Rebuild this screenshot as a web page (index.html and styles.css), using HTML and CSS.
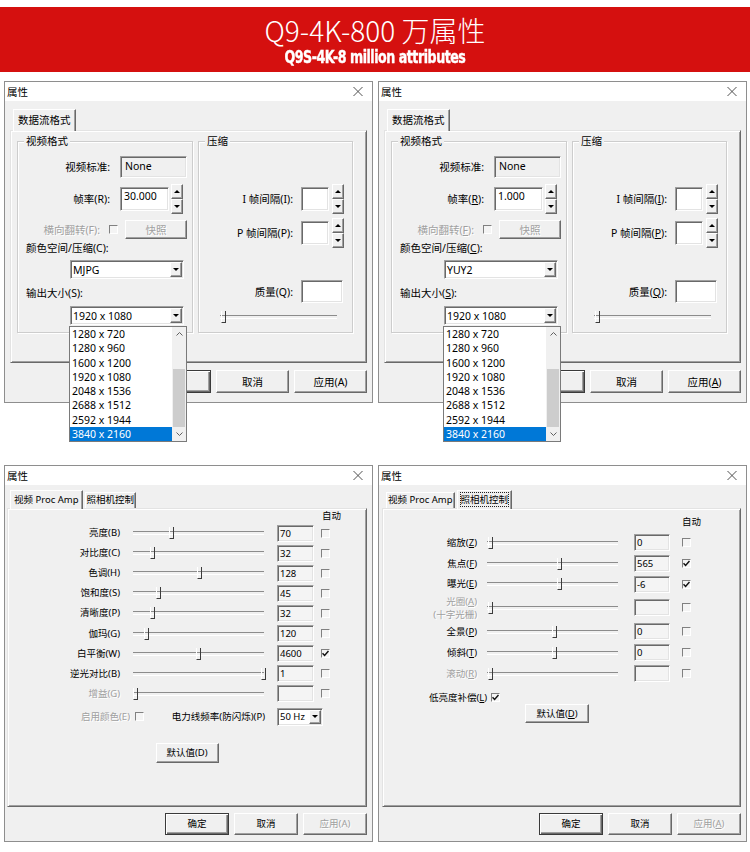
FILE: index.html
```html
<!DOCTYPE html>
<html lang="zh-CN">
<head>
    <meta charset="UTF-8">
    <meta name="viewport" content="width=device-width, initial-scale=1.0">
    <title>Q9-4K-800 万属性</title>
    <link rel="stylesheet" href="styles.css">
</head>
<body>
    <header class="banner">
        <h1>Q9-4K-800 万属性</h1>
        <p><span>Q9S-4K-8 million attributes</span></p>
    </header>

    <main class="shots">

        <!-- stream format, MJPG -->
        <section class="dlg dlg-stream">
            <div class="dlg-title">
                <span>属性</span>
                <svg width="10" height="9" viewBox="0 0 10 9"><path d="M0.5 0L9.5 9M9.5 0L0.5 9" stroke="#505050" fill="none"/></svg>
            </div>
            <div class="dlg-body">
                <div class="tabs"><span class="tab on">数据流格式</span></div>
                <div class="panel">
                    <div class="group g-video">
                        <div class="legend">视频格式</div>
                        <div class="field f-std"><span class="lbl">视频标准:</span><span class="static sunken">None</span></div>
                        <div class="field f-fps"><span class="lbl">帧率(R):</span><span class="edit sunken w49">30.000</span><span class="spin"><i class="up"></i><i class="down"></i></span></div>
                        <div class="field f-flip"><span class="lbl dis">横向翻转(F):</span><span class="check"></span><span class="btn snap dis">快照</span></div>
                        <div class="cap cap-color">颜色空间/压缩(C):</div>
                        <div class="combo sunken combo-color"><span>MJPG</span><i class="drop"></i></div>
                        <div class="cap cap-size">输出大小(S):</div>
                        <div class="combo sunken combo-size"><span>1920 x 1080</span><i class="drop"></i>
                            <div class="list">
                                <ul>
                                    <li>1280 x 720</li>
                                    <li>1280 x 960</li>
                                    <li>1600 x 1200</li>
                                    <li>1920 x 1080</li>
                                    <li>2048 x 1536</li>
                                    <li>2688 x 1512</li>
                                    <li>2592 x 1944</li>
                                    <li class="sel">3840 x 2160</li>
                                </ul>
                                <div class="sb">
                                    <span class="sb-btn"><svg width="7" height="4" viewBox="0 0 7 4"><path d="M0.5 3.5L3.5 0.5L6.5 3.5" stroke="#606060" fill="none"/></svg></span>
                                    <span class="sb-track"><span class="sb-thumb"></span></span>
                                    <span class="sb-btn"><svg width="7" height="4" viewBox="0 0 7 4"><path d="M0.5 0.5L3.5 3.5L6.5 0.5" stroke="#606060" fill="none"/></svg></span>
                                </div>
                            </div>
                        </div>
                    </div>
                    <div class="group g-comp">
                        <div class="legend">压缩</div>
                        <div class="field f-i"><span class="lbl">I 帧间隔(I):</span><span class="edit sunken w28"></span><span class="spin"><i class="up"></i><i class="down"></i></span></div>
                        <div class="field f-p"><span class="lbl">P 帧间隔(P):</span><span class="edit sunken w28"></span><span class="spin"><i class="up"></i><i class="down"></i></span></div>
                        <div class="field f-q"><span class="lbl">质量(Q):</span><span class="edit sunken w42"></span></div>
                        <div class="slider q-slider"><span class="thumb" style="left: 3%"></span></div>
                    </div>
                </div>
                <div class="actions">
                    <span class="btn default">确定</span>
                    <span class="btn">取消</span>
                    <span class="btn">应用(A)</span>
                </div>
            </div>
        </section>

        <!-- stream format, YUY2 -->
        <section class="dlg dlg-stream">
            <div class="dlg-title">
                <span>属性</span>
                <svg width="10" height="9" viewBox="0 0 10 9"><path d="M0.5 0L9.5 9M9.5 0L0.5 9" stroke="#505050" fill="none"/></svg>
            </div>
            <div class="dlg-body">
                <div class="tabs"><span class="tab on">数据流格式</span></div>
                <div class="panel">
                    <div class="group g-video">
                        <div class="legend">视频格式</div>
                        <div class="field f-std"><span class="lbl">视频标准:</span><span class="static sunken">None</span></div>
                        <div class="field f-fps"><span class="lbl">帧率(<u>R</u>):</span><span class="edit sunken w49">1.000</span><span class="spin"><i class="up"></i><i class="down"></i></span></div>
                        <div class="field f-flip"><span class="lbl dis">横向翻转(<u>F</u>):</span><span class="check"></span><span class="btn snap dis">快照</span></div>
                        <div class="cap cap-color">颜色空间/压缩(<u>C</u>):</div>
                        <div class="combo sunken combo-color"><span>YUY2</span><i class="drop"></i></div>
                        <div class="cap cap-size">输出大小(<u>S</u>):</div>
                        <div class="combo sunken combo-size"><span>1920 x 1080</span><i class="drop"></i>
                            <div class="list">
                                <ul>
                                    <li>1280 x 720</li>
                                    <li>1280 x 960</li>
                                    <li>1600 x 1200</li>
                                    <li>1920 x 1080</li>
                                    <li>2048 x 1536</li>
                                    <li>2688 x 1512</li>
                                    <li>2592 x 1944</li>
                                    <li class="sel">3840 x 2160</li>
                                </ul>
                                <div class="sb">
                                    <span class="sb-btn"><svg width="7" height="4" viewBox="0 0 7 4"><path d="M0.5 3.5L3.5 0.5L6.5 3.5" stroke="#606060" fill="none"/></svg></span>
                                    <span class="sb-track"><span class="sb-thumb"></span></span>
                                    <span class="sb-btn"><svg width="7" height="4" viewBox="0 0 7 4"><path d="M0.5 0.5L3.5 3.5L6.5 0.5" stroke="#606060" fill="none"/></svg></span>
                                </div>
                            </div>
                        </div>
                    </div>
                    <div class="group g-comp">
                        <div class="legend">压缩</div>
                        <div class="field f-i"><span class="lbl">I 帧间隔(<u>I</u>):</span><span class="edit sunken w28"></span><span class="spin"><i class="up"></i><i class="down"></i></span></div>
                        <div class="field f-p"><span class="lbl">P 帧间隔(<u>P</u>):</span><span class="edit sunken w28"></span><span class="spin"><i class="up"></i><i class="down"></i></span></div>
                        <div class="field f-q"><span class="lbl">质量(<u>Q</u>):</span><span class="edit sunken w42"></span></div>
                        <div class="slider q-slider"><span class="thumb" style="left: 3%"></span></div>
                    </div>
                </div>
                <div class="actions">
                    <span class="btn default">确定</span>
                    <span class="btn">取消</span>
                    <span class="btn">应用(<u>A</u>)</span>
                </div>
            </div>
        </section>

        <!-- video proc amp -->
        <section class="dlg dlg-amp amp-video">
            <div class="dlg-title">
                <span>属性</span>
                <svg width="10" height="9" viewBox="0 0 10 9"><path d="M0.5 0L9.5 9M9.5 0L0.5 9" stroke="#505050" fill="none"/></svg>
            </div>
            <div class="dlg-body">
                <div class="tabs"><span class="tab on">视频 Proc Amp</span><span class="tab">照相机控制</span></div>
                <div class="panel">
                    <div class="auto-head">自动</div>
                    <div class="prop"><span class="lbl">亮度(B)</span><span class="slider"><span class="thumb" style="left: 30%"></span></span><span class="edit sunken">70</span><span class="check"></span></div>
                    <div class="prop"><span class="lbl">对比度(C)</span><span class="slider"><span class="thumb" style="left: 15%"></span></span><span class="edit sunken">32</span><span class="check"></span></div>
                    <div class="prop"><span class="lbl">色调(H)</span><span class="slider"><span class="thumb" style="left: 51%"></span></span><span class="edit sunken">128</span><span class="check"></span></div>
                    <div class="prop"><span class="lbl">饱和度(S)</span><span class="slider"><span class="thumb" style="left: 20%"></span></span><span class="edit sunken">45</span><span class="check"></span></div>
                    <div class="prop"><span class="lbl">清晰度(P)</span><span class="slider"><span class="thumb" style="left: 15%"></span></span><span class="edit sunken">32</span><span class="check"></span></div>
                    <div class="prop"><span class="lbl">伽玛(G)</span><span class="slider"><span class="thumb" style="left: 11%"></span></span><span class="edit sunken">120</span><span class="check"></span></div>
                    <div class="prop"><span class="lbl">白平衡(W)</span><span class="slider"><span class="thumb" style="left: 50%"></span></span><span class="edit sunken">4600</span><span class="check"><svg width="7" height="7" viewBox="0 0 7 7"><path d="M0.5 3.2L2.6 5.4L6.5 1" stroke="#111" stroke-width="1.5" fill="none"/></svg></span></div>
                    <div class="prop"><span class="lbl">逆光对比(B)</span><span class="slider"><span class="thumb" style="left: 100%"></span></span><span class="edit sunken">1</span><span class="check"></span></div>
                    <div class="prop"><span class="lbl dis">增益(G)</span><span class="slider"><span class="thumb" style="left: 2%"></span></span><span class="edit sunken"></span><span class="check"></span></div>
                    <div class="power">
                        <span class="lbl-e dis">启用颜色(E)</span><span class="check"></span>
                        <span class="lbl-p">电力线频率(防闪烁)(P)</span>
                        <span class="combo sunken combo-hz"><span>50 Hz</span><i class="drop"></i></span>
                    </div>
                    <span class="btn btn-def">默认值(D)</span>
                </div>
                <div class="actions">
                    <span class="btn default">确定</span>
                    <span class="btn">取消</span>
                    <span class="btn dis">应用(A)</span>
                </div>
            </div>
        </section>

        <!-- camera control -->
        <section class="dlg dlg-amp amp-camera">
            <div class="dlg-title">
                <span>属性</span>
                <svg width="10" height="9" viewBox="0 0 10 9"><path d="M0.5 0L9.5 9M9.5 0L0.5 9" stroke="#505050" fill="none"/></svg>
            </div>
            <div class="dlg-body">
                <div class="tabs"><span class="tab">视频 Proc Amp</span><span class="tab on"><span class="focus">照相机控制</span></span></div>
                <div class="panel">
                    <div class="auto-head">自动</div>
                    <div class="prop"><span class="lbl">缩放(<u>Z</u>)</span><span class="slider"><span class="thumb" style="left: 3%"></span></span><span class="edit sunken">0</span><span class="check"></span></div>
                    <div class="prop"><span class="lbl">焦点(<u>F</u>)</span><span class="slider"><span class="thumb" style="left: 56%"></span></span><span class="edit sunken">565</span><span class="check"><svg width="7" height="7" viewBox="0 0 7 7"><path d="M0.5 3.2L2.6 5.4L6.5 1" stroke="#111" stroke-width="1.5" fill="none"/></svg></span></div>
                    <div class="prop short"><span class="lbl">曝光(<u>E</u>)</span><span class="slider"><span class="thumb" style="left: 56%"></span></span><span class="edit sunken">-6</span><span class="check"><svg width="7" height="7" viewBox="0 0 7 7"><path d="M0.5 3.2L2.6 5.4L6.5 1" stroke="#111" stroke-width="1.5" fill="none"/></svg></span></div>
                    <div class="prop tall"><span class="lbl dis">光圈(<u>A</u>)<br>(十字光栅)</span><span class="slider"><span class="thumb" style="left: 3%"></span></span><span class="edit sunken"></span><span class="check"></span></div>
                    <div class="prop"><span class="lbl">全景(<u>P</u>)</span><span class="slider"><span class="thumb" style="left: 52%"></span></span><span class="edit sunken">0</span><span class="check"></span></div>
                    <div class="prop"><span class="lbl">倾斜(<u>T</u>)</span><span class="slider"><span class="thumb" style="left: 52%"></span></span><span class="edit sunken">0</span><span class="check"></span></div>
                    <div class="prop"><span class="lbl dis">滚动(<u>R</u>)</span><span class="slider"><span class="thumb" style="left: 3%"></span></span><span class="edit sunken"></span><span class="check"></span></div>
                    <div class="lowlight">
                        <span>低亮度补偿(<u>L</u>)</span>
                        <span class="check"><svg width="7" height="7" viewBox="0 0 7 7"><path d="M0.5 3.2L2.6 5.4L6.5 1" stroke="#111" stroke-width="1.5" fill="none"/></svg></span>
                    </div>
                    <span class="btn btn-def">默认值(<u>D</u>)</span>
                </div>
                <div class="actions">
                    <span class="btn default">确定</span>
                    <span class="btn">取消</span>
                    <span class="btn dis">应用(<u>A</u>)</span>
                </div>
            </div>
        </section>

    </main>
</body>
</html>
```

FILE: styles.css
```css
* {
    box-sizing: border-box;
}
body {
    margin: 0;
    background: #fff;
    color: #000;
    font-family: "Noto Sans", "Noto Sans CJK SC", sans-serif;
}

/* red title band */
.banner {
    margin-top: 7px;
    height: 65px;
    background: #d5100f;
    color: #fff;
    text-align: center;
}
.banner h1 {
    margin: 0;
    padding-top: 8px;
    font-family: "Noto Sans CJK SC", sans-serif;
    font-size: 28px;
    font-weight: 300;
    line-height: 30px;
}
.banner p {
    margin: 3px 0 0;
    line-height: 18px;
}
.banner p span {
    display: inline-block;
    font-family: "DejaVu Sans Condensed", "DejaVu Sans", sans-serif;
    font-stretch: condensed;
    font-weight: bold;
    font-size: 18px;
    line-height: 18px;
    letter-spacing: -0.6px;
    -webkit-text-stroke: 0.4px #fff;
    transform: scaleX(0.78);
}

/* 2 x 2 screenshots */
.shots {
    display: grid;
    grid-template-columns: 369px 369px;
    column-gap: 5px;
    row-gap: 62px;
    margin-top: 9px;
    padding-left: 4px;
}

/* dialog frame */
.dlg {
    display: flex;
    flex-direction: column;
    border: 1px solid #8e8e8e;
    background: #f0f0f0;
    font-size: 10.5px;
    line-height: 14px;
}
.dlg-stream {
    height: 322px;
}
.dlg-amp {
    height: 377px;
    font-size: 9.5px;
}
.dlg-title {
    display: flex;
    align-items: center;
    justify-content: space-between;
    height: 19px;
    padding: 0 9px 0 2px;
    background: #fff;
    font-size: 10.5px;
}
.dlg-title svg {
    display: block;
}
.dlg-body {
    flex: 1;
    padding: 8px 5px 0;
}
.dlg-amp .dlg-body {
    padding: 5px 5px 0 2px;
}
.amp-camera .dlg-body {
    padding-left: 3px;
}

.dis {
    color: #a0a0a0;
    text-shadow: 1px 1px 0 #fff;
}

/* tabs */
.tabs {
    position: relative;
    z-index: 1;
    display: flex;
    align-items: flex-end;
    gap: 2px;
    height: 21px;
    padding-left: 3px;
}
.dlg-amp .tabs {
    height: 18px;
}
.amp-camera .tabs {
    padding-left: 4px;
}
.tab {
    height: 16px;
    padding: 0 1px;
    line-height: 14px;
    border: 1px solid;
    border-color: #fff #696969 transparent #fff;
    border-bottom: 0;
    box-shadow: inset -1px 0 #a0a0a0;
    background: #f0f0f0;
}
.tab.on {
    height: 19px;
    margin-bottom: -1px;
    padding: 0 3px;
    line-height: 17px;
}
.dlg-stream .tab.on {
    height: 22px;
    padding: 0 4px;
    line-height: 20px;
}
.focus {
    outline: 1px dotted #222;
    outline-offset: 0;
}

.panel {
    border: 1px solid;
    border-color: #e3e3e3 #696969 #696969 #e3e3e3;
    box-shadow: inset 1px 1px #fff, inset -1px -1px #a0a0a0;
}
.dlg-stream .panel {
    display: flex;
    gap: 5px;
    height: 233px;
    padding: 10px 0 0 6px;
}
.dlg-amp .panel {
    height: 299px;
}

/* bevels */
.sunken {
    border: 1px solid;
    border-color: #a0a0a0 #fff #fff #a0a0a0;
    box-shadow: inset 1px 1px #696969, inset -1px -1px #e3e3e3;
}
.btn {
    display: flex;
    align-items: center;
    justify-content: center;
    border: 1px solid;
    border-color: #fff #696969 #696969 #fff;
    box-shadow: inset -1px -1px #a0a0a0;
    background: #f0f0f0;
}
.btn.default {
    border-color: #3a3a3a;
    box-shadow: inset 1px 1px #fff, inset -1px -1px #696969, inset -2px -2px #a0a0a0;
}

/* group boxes */
.group {
    height: 192px;
    border: 1px solid #cdcdcd;
    box-shadow: inset 1px 1px #fff, 1px 1px #fff;
}
.g-video {
    width: 176px;
}
.g-comp {
    width: 155px;
}
.legend {
    width: fit-content;
    margin: -9px 0 0 6px;
    padding: 0 2px;
    background: #f0f0f0;
    line-height: 16px;
}

.field {
    display: flex;
    align-items: center;
}
.lbl {
    flex: none;
    text-align: right;
}
.g-video .lbl {
    width: 92px;
    margin-right: 10px;
}
.g-video .f-flip .lbl {
    width: 82px;
    margin-right: 9px;
}
.g-comp .lbl {
    width: 94px;
    margin-right: 8px;
}
.f-std {
    height: 22px;
    margin-top: 7px;
}
.f-fps {
    height: 24px;
    margin-top: 9px;
}
.f-flip {
    height: 19px;
    margin-top: 9px;
}
.f-i {
    height: 24px;
    margin-top: 38px;
}
.f-p {
    height: 24px;
    margin-top: 10px;
}
.f-q {
    height: 23px;
    margin-top: 35px;
}

.static {
    width: 67px;
    height: 22px;
    padding: 1px 0 0 4px;
    line-height: 16px;
}
.edit {
    flex: none;
    height: 24px;
    padding-left: 3px;
    background: #fff;
    line-height: 16px;
}
.w49 {
    width: 49px;
}
.w28 {
    width: 28px;
}
.w42 {
    width: 42px;
    height: 23px;
}

.spin {
    display: flex;
    flex-direction: column;
    flex: none;
    width: 12px;
    height: 30px;
    margin-left: 2px;
}
.g-comp .spin {
    margin-left: 3px;
}
.spin i {
    flex: 1;
    display: flex;
    align-items: center;
    justify-content: center;
    border: 1px solid;
    border-color: #fff #696969 #696969 #fff;
    box-shadow: inset -1px -1px #a0a0a0;
    background: #f0f0f0;
}
.spin i::before {
    content: "";
    border-left: 3px solid transparent;
    border-right: 3px solid transparent;
}
.spin .up::before {
    border-bottom: 3px solid #000;
}
.spin .down::before {
    border-top: 3px solid #000;
}

.check {
    display: flex;
    align-items: center;
    justify-content: center;
    flex: none;
    width: 9px;
    height: 9px;
    border: 1px solid;
    border-color: #808080 #fff #fff #808080;
    background: #f4f4f4;
}
.check svg {
    display: block;
}
.f-flip .check {
    margin-right: 7px;
}
.snap {
    width: 62px;
    height: 19px;
}

.cap {
    margin-left: 8px;
    line-height: 16px;
}
.cap-color {
    margin-top: 1px;
}
.cap-size {
    margin-top: 6px;
}

/* combo boxes and the open list */
.combo {
    position: relative;
    display: flex;
    align-items: center;
    width: 114px;
    height: 19px;
    padding: 0 1px 0 2px;
    background: #fff;
}
.combo > span {
    flex: 1;
}
.combo-color {
    margin: 4px 0 0 52px;
}
.combo-size {
    margin: 5px 0 0 52px;
}
.drop {
    display: flex;
    align-items: center;
    justify-content: center;
    width: 12px;
    height: 15px;
    border: 1px solid;
    border-color: #fff #696969 #696969 #fff;
    box-shadow: inset -1px -1px #a0a0a0;
    background: #f0f0f0;
}
.drop::before {
    content: "";
    border-left: 3px solid transparent;
    border-right: 3px solid transparent;
    border-top: 3px solid #000;
}

.list {
    position: absolute;
    z-index: 5;
    top: calc(100% + 2px);
    left: -2px;
    display: flex;
    width: 118px;
    height: 116px;
    border: 1px solid #7a7a7a;
    background: #fff;
}
.list ul {
    flex: 1;
    margin: 0;
    padding: 0;
    list-style: none;
}
.list li {
    height: 14.25px;
    padding-left: 2px;
    line-height: 14.25px;
}
.list li.sel {
    background: #0078d7;
    color: #fff;
}
.sb {
    display: flex;
    flex-direction: column;
    width: 14px;
    background: #f0f0f0;
}
.sb-btn {
    display: flex;
    align-items: center;
    justify-content: center;
    height: 14px;
}
.sb-track {
    flex: 1;
    display: flex;
    flex-direction: column;
    justify-content: flex-end;
    padding: 0 1px;
}
.sb-thumb {
    height: 58px;
    background: #cdcdcd;
}

/* trackbars */
.slider {
    position: relative;
    display: flex;
    align-items: center;
    flex: none;
    height: 20px;
}
.slider::before {
    content: "";
    flex: 1;
    height: 2px;
    border-top: 1px solid #8c8c8c;
    border-bottom: 1px solid #fff;
}
.thumb {
    position: absolute;
    top: 50%;
    width: 5px;
    height: 12px;
    margin: -6px 0 0 -3px;
    border-left: 1px solid #fff;
    border-right: 1px solid #3c3c3c;
    border-bottom: 1px solid #3c3c3c;
}
.q-slider {
    width: 117px;
    height: 12px;
    margin: 8px 0 0 21px;
}

.actions {
    display: flex;
    justify-content: flex-end;
    gap: 5px;
    margin-top: 7px;
}
.actions .btn {
    width: 73px;
    height: 23px;
}
.dlg-amp .actions {
    margin-top: 6px;
}
.dlg-amp .actions .btn {
    width: 64px;
    height: 22px;
}

/* property pages */
.auto-head {
    line-height: 14px;
}
.amp-video .auto-head {
    margin-left: 314px;
}
.amp-camera .auto-head {
    margin: 5px 0 2px 299px;
    line-height: 16px;
}
.prop {
    display: flex;
    align-items: center;
    height: 20.1px;
}
.amp-camera .prop {
    height: 21px;
}
.amp-camera .prop.short {
    height: 20px;
}
.amp-camera .prop.tall {
    height: 27px;
    line-height: 13px;
}
.prop .edit {
    height: 17px;
    padding-left: 2px;
    background: #f4f4f4;
    line-height: 15px;
}
.amp-video .prop .lbl {
    width: 112px;
    margin-right: 13px;
}
.amp-video .slider {
    width: 131px;
    margin-right: 13px;
}
.amp-video .prop .edit {
    width: 37px;
    margin-right: 7px;
}
.amp-camera .prop .lbl {
    width: 94px;
    margin-right: 10px;
}
.amp-camera .slider {
    width: 131px;
    margin-right: 16px;
}
.amp-camera .prop .edit {
    width: 36px;
    margin-right: 12px;
}

.power {
    display: flex;
    align-items: center;
    height: 18px;
    margin-top: 4px;
}
.lbl-e {
    width: 122px;
    margin-right: 5px;
    text-align: right;
}
.lbl-p {
    width: 121px;
    margin-right: 12px;
    text-align: right;
}
.combo-hz {
    width: 46px;
    height: 18px;
}
.combo-hz .drop {
    height: 14px;
}

.btn-def {
    width: 63px;
    height: 20px;
    margin: 17px auto 0;
}
.amp-camera .btn-def {
    width: 64px;
    height: 19px;
    margin: 0 0 0 142px;
}
.lowlight {
    display: flex;
    align-items: center;
    gap: 4px;
    height: 13px;
    margin: 7px 0 0 46px;
}
```
